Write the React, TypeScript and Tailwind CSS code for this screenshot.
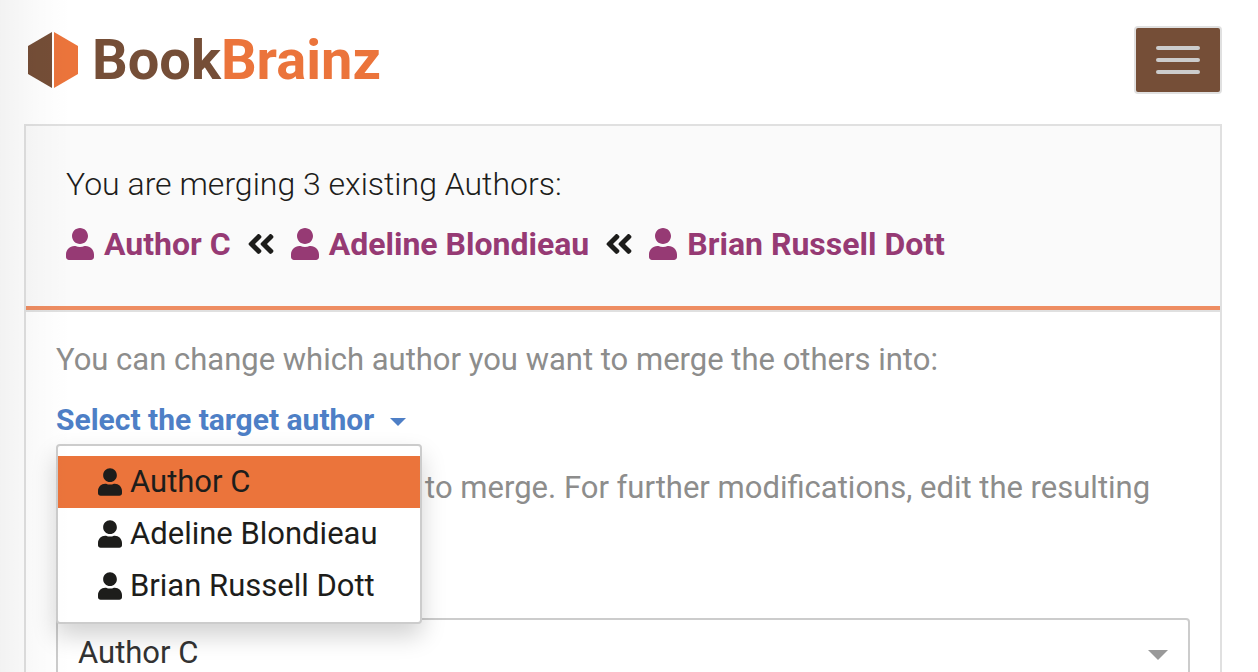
import { useState } from "react";
import { FaAngleDoubleLeft, FaUser } from "react-icons/fa";

interface Author { id: string; name: string; }

const authors: Author[] = [
  { id: "author-c", name: "Author C" },
  { id: "adeline-blondieau", name: "Adeline Blondieau" },
  { id: "brian-russell-dott", name: "Brian Russell Dott" },
];

function Logo() {
  return (
    <a href="#" className="flex items-center gap-[14px]">
      <svg width="50" height="56" viewBox="0 0 50 56" aria-hidden="true">
        <path d="M24 0V56L0 42V14Z" fill="#754e37" />
        <path d="M26 0V56L50 42V14Z" fill="#eb743b" />
      </svg>
      <span className="text-[56px] leading-none font-bold text-[#754e37]">
        Book<span className="text-[#eb743b]">Brainz</span>
      </span>
    </a>
  );
}

function Header() {
  return (
    <header className="flex items-center justify-between pt-[26px] pl-1">
      <Logo />
      <button type="button" aria-label="Toggle navigation" className="flex h-[68px] w-[88px] flex-col items-center justify-center gap-2 rounded border-2 border-[#e0e0e0] bg-[#754e37]">
        <span className="h-1 w-11 rounded-xs bg-[#cccccc]" />
        <span className="h-1 w-11 rounded-xs bg-[#cccccc]" />
        <span className="h-1 w-11 rounded-xs bg-[#cccccc]" />
      </button>
    </header>
  );
}

function MergeSummary() {
  return (
    <div className="border-b-2 border-[#e0e0e0]">
      <div className="border-b-4 border-[#ee8d62] bg-[#fafafa] px-10 pt-7 pb-8 text-[32px] leading-[60px]">
        <h1 className="font-light">You are merging {authors.length} existing Authors:</h1>
        <div className="flex items-center gap-4 font-bold">
          {authors.map((author, index) => (
            <div key={author.id} className="flex items-center gap-4">
              {index > 0 && <FaAngleDoubleLeft className="h-8 w-7" />}
              <a href="#" className="flex items-center gap-[10px] text-[#963a74]">
                <FaUser className="h-8 w-7" />
                {author.name}
              </a>
            </div>
          ))}
        </div>
      </div>
    </div>
  );
}

export default function App() {
  const [target, setTarget] = useState(authors[0].id);
  const [open, setOpen] = useState(true);

  const selectTarget = (id: string) => {
    setTarget(id);
    setOpen(false);
  };

  return (
    <div className="relative min-h-screen bg-white pr-9 pl-6 text-[#1d1d1b] font-[Roboto,sans-serif]">
      <Header />

      <main className="mt-[30px] border-2 border-[#e0e0e0]">
        <MergeSummary />

        <div className="px-[30px] pt-[18px] pb-8 text-[31px]">
          <p className="leading-[60px] text-[#8d8d8c]">You can change which author you want to merge the others into:</p>

          <div className="relative">
            <button type="button" aria-haspopup="menu" aria-expanded={open} onClick={() => setOpen(!open)} className="flex items-center gap-4 text-[30px] leading-[60px] font-bold text-[#4e7fc6]">
              Select the target author
              <svg width="16" height="8" viewBox="0 0 16 8" fill="currentColor" aria-hidden="true" className="mt-1"><path d="M0 0H16L8 8Z" /></svg>
            </button>

            {open && (
              <ul role="menu" className="absolute top-[54px] left-0 z-10 w-[366px] rounded border-2 border-[#cccccc] bg-white py-[10px] shadow-[0_12px_24px_rgba(0,0,0,0.18)]">
                {authors.map((author) => (
                  <li key={author.id} role="none">
                    <button
                      type="button"
                      role="menuitem"
                      onClick={() => selectTarget(author.id)}
                      className={`flex h-[52px] w-full items-center gap-2 pl-10 ${author.id === target ? "bg-[#eb743b]" : "bg-white"}`}
                    >
                      <FaUser className="h-7 w-6" />
                      {author.name}
                    </button>
                  </li>
                ))}
              </ul>
            )}
          </div>

          <p className="mt-4 leading-[44px] text-[#8d8d8c]">
            Select the values you wish to merge. For further modifications, edit the resulting author.
          </p>

          <div className="relative mt-16">
            <select aria-label="Name" defaultValue={authors[0].id} className="h-[70px] w-full appearance-none rounded border-2 border-[#cccccc] bg-white px-5 text-[#333333]">
              {authors.map((author) => <option key={author.id} value={author.id}>{author.name}</option>)}
            </select>
            <svg width="20" height="10" viewBox="0 0 20 10" fill="#999999" aria-hidden="true" className="pointer-events-none absolute top-8 right-[22px]"><path d="M0 0H20L10 10Z" /></svg>
          </div>
        </div>
      </main>

      {/* soft shade along the left edge */}
      <div className="pointer-events-none absolute inset-y-0 left-0 z-20 w-[70px] bg-linear-to-r from-black/5 via-black/2 to-transparent" />
    </div>
  );
}
